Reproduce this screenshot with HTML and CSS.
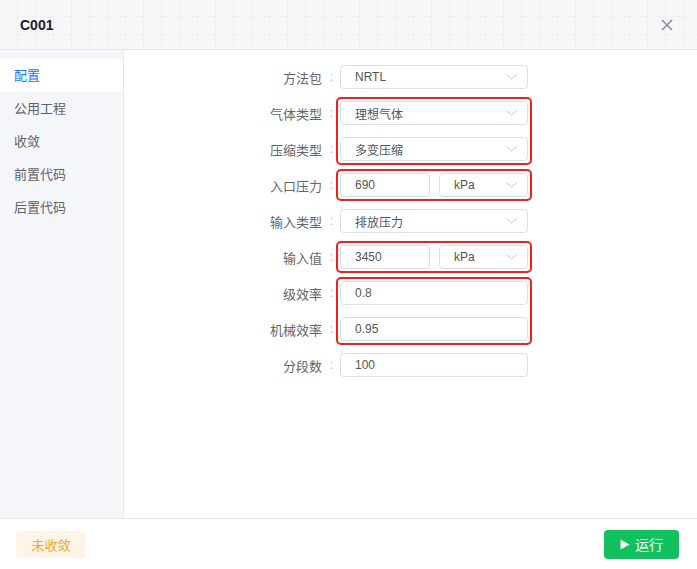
FILE: index.html
```html
<!DOCTYPE html>
<html lang="zh">
<head>
<meta charset="utf-8">
<title>C001</title>
<link rel="stylesheet" href="styles.css">
</head>
<body>
<div class="dialog">
  <header class="header">
    <div class="title">C001</div>
    <button class="close" aria-label="关闭">
      <svg width="12" height="12" viewBox="0 0 12 12"><path d="M1 1L11 11M11 1L1 11" stroke="#8a8d93" stroke-width="1.6" fill="none"/></svg>
    </button>
  </header>
  <div class="body">
    <nav class="sidebar">
      <div class="nav-item active">配置</div>
      <div class="nav-item">公用工程</div>
      <div class="nav-item">收敛</div>
      <div class="nav-item">前置代码</div>
      <div class="nav-item">后置代码</div>
    </nav>
    <main class="content">
      <div class="form">
        <div class="group">
          <div class="labels"><div class="label">方法包<span class="colon">:</span></div></div>
          <div class="controls">
            <div class="select"><span>NRTL</span><svg class="chev" width="11" height="6" viewBox="0 0 11 6"><path d="M0.5 0.5L5.5 5L10.5 0.5" stroke="#c0c4cc" fill="none"/></svg></div>
          </div>
        </div>
        <div class="group">
          <div class="labels">
            <div class="label">气体类型<span class="colon">:</span></div>
            <div class="label">压缩类型<span class="colon">:</span></div>
          </div>
          <div class="controls marked">
            <div class="select"><span>理想气体</span><svg class="chev" width="11" height="6" viewBox="0 0 11 6"><path d="M0.5 0.5L5.5 5L10.5 0.5" stroke="#c0c4cc" fill="none"/></svg></div>
            <div class="select"><span>多变压缩</span><svg class="chev" width="11" height="6" viewBox="0 0 11 6"><path d="M0.5 0.5L5.5 5L10.5 0.5" stroke="#c0c4cc" fill="none"/></svg></div>
          </div>
        </div>
        <div class="group">
          <div class="labels"><div class="label">入口压力<span class="colon">:</span></div></div>
          <div class="controls marked">
            <div class="split">
              <div class="input num">690</div>
              <div class="select unit"><span>kPa</span><svg class="chev" width="11" height="6" viewBox="0 0 11 6"><path d="M0.5 0.5L5.5 5L10.5 0.5" stroke="#c0c4cc" fill="none"/></svg></div>
            </div>
          </div>
        </div>
        <div class="group">
          <div class="labels"><div class="label">输入类型<span class="colon">:</span></div></div>
          <div class="controls">
            <div class="select"><span>排放压力</span><svg class="chev" width="11" height="6" viewBox="0 0 11 6"><path d="M0.5 0.5L5.5 5L10.5 0.5" stroke="#c0c4cc" fill="none"/></svg></div>
          </div>
        </div>
        <div class="group">
          <div class="labels"><div class="label">输入值<span class="colon">:</span></div></div>
          <div class="controls marked">
            <div class="split">
              <div class="input num">3450</div>
              <div class="select unit"><span>kPa</span><svg class="chev" width="11" height="6" viewBox="0 0 11 6"><path d="M0.5 0.5L5.5 5L10.5 0.5" stroke="#c0c4cc" fill="none"/></svg></div>
            </div>
          </div>
        </div>
        <div class="group">
          <div class="labels">
            <div class="label">级效率<span class="colon">:</span></div>
            <div class="label">机械效率<span class="colon">:</span></div>
          </div>
          <div class="controls marked">
            <div class="input">0.8</div>
            <div class="input">0.95</div>
          </div>
        </div>
        <div class="group">
          <div class="labels"><div class="label">分段数<span class="colon">:</span></div></div>
          <div class="controls">
            <div class="input">100</div>
          </div>
        </div>
      </div>
    </main>
  </div>
  <footer class="footer">
    <button class="btn-warn">未收敛</button>
    <button class="btn-run"><svg width="10" height="11" viewBox="0 0 10 11"><path d="M0.5 0.5L9.5 5.5L0.5 10.5Z" fill="#fff"/></svg>运行</button>
  </footer>
</div>
</body>
</html>
```

FILE: styles.css
```css
* { box-sizing: border-box; }
html, body { margin: 0; padding: 0; }
body {
  width: 697px;
  height: 569px;
  overflow: hidden;
  font-family: "Liberation Sans", "Noto Sans CJK SC", sans-serif;
  color: #606266;
  background: #fff;
}
.dialog {
  display: flex;
  flex-direction: column;
  height: 569px;
}
.header {
  height: 50px;
  flex: none;
  display: flex;
  align-items: center;
  justify-content: space-between;
  padding: 0 24px 0 20px;
  border-bottom: 1px solid #e6e8ec;
  background-color: #f6f7f9;
  background-image:
    linear-gradient(to right, rgba(225,228,234,0.3) 1px, transparent 1px),
    linear-gradient(to bottom, rgba(225,228,234,0.3) 1px, transparent 1px);
  background-size: 18px 18px;
  background-position: -1px -2px;
}
.title {
  font-size: 14px;
  font-weight: bold;
  color: #1d2129;
}
.close {
  border: 0;
  background: none;
  padding: 0;
  width: 12px;
  height: 12px;
  display: flex;
}
.body {
  flex: 1;
  display: flex;
  min-height: 0;
}
.sidebar {
  width: 124px;
  flex: none;
  background: #f5f6fa;
  border-right: 1px solid #e6e8ec;
  padding-top: 9px;
}
.nav-item {
  height: 33px;
  line-height: 33px;
  padding-left: 14px;
  font-size: 13px;
  color: #606266;
}
.nav-item.active {
  background: #fff;
  color: #1677ff;
}
.content {
  flex: 1;
  padding: 15px 0 0 118px;
}
.form {
  display: flex;
  flex-direction: column;
  gap: 12px;
}
.group {
  display: flex;
}
.labels {
  display: flex;
  flex-direction: column;
  gap: 12px;
}
.label {
  width: 98px;
  height: 24px;
  display: flex;
  align-items: center;
  justify-content: flex-end;
  font-size: 13px;
  color: #62656b;
}
.colon {
  width: 18px;
  text-align: center;
  color: #a8abb2;
  font-size: 12px;
  padding-left: 1px;
}
.controls {
  width: 188px;
  display: flex;
  flex-direction: column;
  gap: 12px;
}
.controls.marked {
  border-radius: 1px;
  outline: 2px solid #f51d1d;
  outline-offset: 2px;
}
.select, .input {
  height: 24px;
  border: 1px solid #dcdfe6;
  border-radius: 4px;
  display: flex;
  align-items: center;
  justify-content: space-between;
  padding: 0 10px 0 14px;
  font-size: 12px;
  color: #555;
  background: #fff;
}
.chev { flex: none; }
.split {
  display: flex;
  gap: 9px;
}
.split .num { width: 90px; }
.split .unit { width: 89px; }
.footer {
  height: 51px;
  flex: none;
  border-top: 1px solid #e6e8ec;
  display: flex;
  align-items: center;
  justify-content: space-between;
  padding: 0 18px 0 16px;
}
.btn-warn {
  width: 70px;
  height: 27px;
  border: 0;
  border-radius: 4px;
  background: #fdf5e7;
  color: #f5a623;
  font-family: inherit;
  font-size: 13px;
  padding: 0;
}
.btn-run {
  width: 75px;
  height: 29px;
  border: 0;
  border-radius: 4px;
  background: #11c05e;
  color: #fff;
  font-family: inherit;
  font-size: 14px;
  display: flex;
  align-items: center;
  justify-content: center;
  gap: 5px;
  padding: 0;
}
```
